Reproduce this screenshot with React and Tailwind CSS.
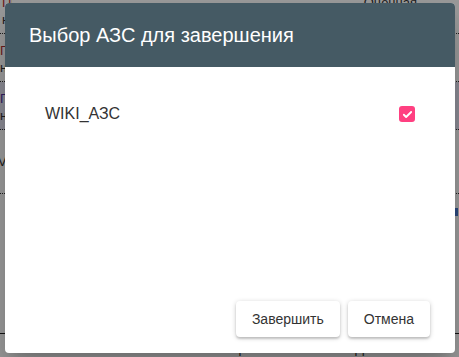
import React from 'react'

const font = { fontFamily: '"Liberation Sans", Arial, sans-serif' }

const EdgeCell = ({ top, bottom, color }) => (
  <div className="w-[10px] overflow-hidden whitespace-nowrap">
    <div className={color}>{top}</div>
    <div>{bottom}</div>
  </div>
)

const BackgroundTable = () => (
  <div className="flex h-full w-full flex-col bg-white text-[13px] leading-[17px] text-[#333]">
    <div className="flex h-[34px] justify-between border-b border-dotted border-[#333] px-[2px]">
      <div className="-mt-[6px]">
        <EdgeCell top="Приходная" bottom="накладная" color="text-[#b03030]" />
      </div>
      <div className="-mt-[6px] pr-[40px]">Оценная</div>
    </div>
    <div className="flex h-[48px] items-start border-b border-dotted border-[#333] pt-[8px]">
      <EdgeCell top="Приходная" bottom="накладная" color="text-[#b03030]" />
    </div>
    <div className="flex h-[48px] items-start border-b border-dotted border-[#333] bg-[#e4e4f4] pt-[8px]">
      <EdgeCell top="Приходная" bottom="накладная" color="text-[#5030a0]" />
    </div>
    <div className="flex h-[65px] items-center border-b border-dotted border-[#333]">
      <div className="-ml-[2px] w-[12px] overflow-hidden">Vo</div>
    </div>
    <div className="flex h-[24px] justify-end pr-[1px]">
      <div className="mt-[14px] h-[8px] w-[3px] bg-[#4a7bd0]" />
    </div>
    <div className="h-[116px] border-b border-[#222]" />
    <div className="flex gap-[100px] pl-[36px] pt-[6px]">
      <span>Количество</span>
      <span>Номер</span>
      <span>НДС</span>
      <span>Сумма</span>
    </div>
  </div>
)

export default function App() {
  return (
    <div className="relative h-[357px] w-[459px] overflow-hidden" style={font}>
      <BackgroundTable />
      <div className="absolute inset-0 bg-black/40" />
      <div className="absolute left-[5px] top-[3px] flex h-[350px] w-[450px] flex-col overflow-hidden rounded-[4px] bg-white shadow-[0_11px_15px_-7px_rgba(0,0,0,0.2),0_24px_38px_3px_rgba(0,0,0,0.14)]">
        <div className="flex h-[64px] shrink-0 items-center bg-[#455a64] px-[24px] text-[20px] text-white">
          Выбор АЗС для завершения
        </div>
        <div className="flex-1">
          <div className="flex items-center justify-between pl-[40px] pr-[40px] pt-[35px]">
            <span className="text-[16px] text-[#333]">WIKI_АЗС</span>
            <span className="flex h-[16px] w-[16px] items-center justify-center rounded-[3px] bg-[#ff4081]">
              <svg width="11" height="11" viewBox="0 0 24 24" fill="none" stroke="white" strokeWidth="4" strokeLinecap="round" strokeLinejoin="round">
                <path d="M4 12.5l5 5L20 6.5" />
              </svg>
            </span>
          </div>
        </div>
        <div className="flex justify-end gap-[8px] pb-[16px] pr-[25px]">
          <button className="h-[36px] rounded-[4px] bg-white px-[16px] text-[14px] text-[#333] shadow-[0_1px_5px_rgba(0,0,0,0.2),0_2px_2px_rgba(0,0,0,0.14)]">
            Завершить
          </button>
          <button className="h-[36px] rounded-[4px] bg-white px-[16px] text-[14px] text-[#333] shadow-[0_1px_5px_rgba(0,0,0,0.2),0_2px_2px_rgba(0,0,0,0.14)]">
            Отмена
          </button>
        </div>
      </div>
    </div>
  )
}
